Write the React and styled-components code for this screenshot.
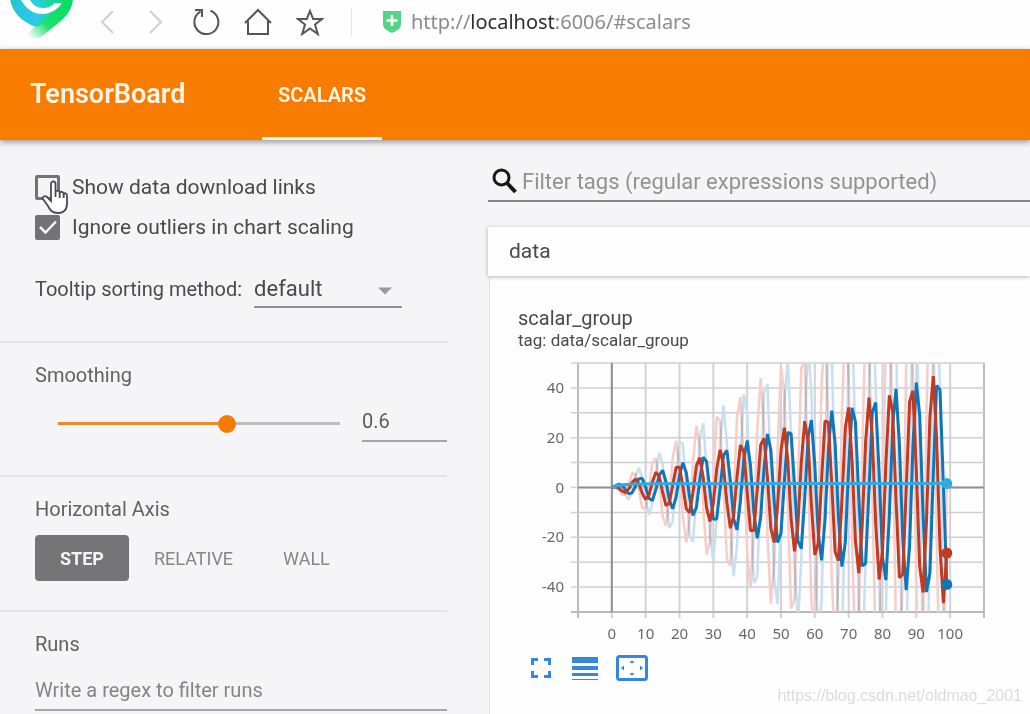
import React, { useState } from "react";
import styled, { createGlobalStyle } from "styled-components";

const GlobalStyle = createGlobalStyle`
    * {
        box-sizing: border-box;
    }

    body {
        margin: 0;
        background-color: #f5f5f7;
        font-family: Roboto, "Liberation Sans", sans-serif;
        color: #4a4a4a;
    }

    button, input, select {
        font-family: inherit;
        margin: 0;
    }
`;

const Page = styled.div`
    position: relative;
    display: flex;
    flex-direction: column;
    height: 100vh;
    overflow: hidden;
`;

const BrowserBar = styled.div`
    display: flex;
    align-items: center;
    flex: none;
    height: 49px;
    padding-bottom: 5px;
    background-color: #fefefe;
`;

const Logo = styled.svg`
    flex: none;
    align-self: flex-start;
    width: 84px;
    height: 44px;
`;

const NavButton = styled.button`
    display: flex;
    align-items: center;
    justify-content: center;
    flex: none;
    width: ${(props) => (props.$narrow ? "48px" : "52px")};
    height: 44px;
    padding: 0;
    border: none;
    background: none;
    color: ${(props) => (props.$faded ? "#cfcfd4" : "#55555a")};
`;

const BarDivider = styled.div`
    width: 1px;
    height: 28px;
    margin: 0 30px 0 15px;
    background-color: #e4e4e8;
`;

const Address = styled.div`
    margin-left: 9px;
    font-family: "Noto Sans", sans-serif;
    font-size: 20px;
    line-height: 28px;
    color: #8b8b92;

    b {
        font-weight: 400;
        color: #2c2c34;
    }
`;

const Toolbar = styled.header`
    display: flex;
    flex: none;
    position: relative;
    height: 91px;
    background-color: #f77c00;
    box-shadow: 0 2px 6px rgba(60, 60, 80, 0.55);
    color: #fff4e4;
`;

const Brand = styled.h1`
    width: 262px;
    margin: 0;
    padding-left: 30px;
    font-size: 27px;
    font-weight: 600;
    line-height: 91px;
`;

const Tab = styled.button`
    width: 120px;
    padding: 3px 0 0;
    border: none;
    border-bottom: 3px solid #fff4e4;
    background: none;
    color: inherit;
    font-size: 20px;
    font-weight: 600;
`;

const Content = styled.div`
    display: flex;
    flex: 1;
    min-height: 0;
`;

const Sidebar = styled.aside`
    flex: none;
    width: 447px;
    padding-top: 7px;
`;

const Section = styled.section`
    padding: 20px 0 29px 35px;
    border-bottom: ${(props) => (props.$last ? "none" : "2px solid #e4e4e6")};
`;

const CheckRow = styled.label`
    display: flex;
    align-items: center;
    position: relative;
    gap: 12px;
    height: 40px;
    font-size: 21px;
`;

const CheckBox = styled.input`
    appearance: none;
    width: 25px;
    height: 25px;
    border: 3px solid #737375;
    border-radius: 2px;

    &:checked {
        background-color: #737375;
    }
`;

const CheckMark = styled.svg`
    position: absolute;
    left: 3px;
    top: 10px;
    width: 20px;
    height: 20px;
`;

const Pointer = styled.svg`
    position: absolute;
    z-index: 1;
    left: 6px;
    top: 13px;
    width: 28px;
    height: 36px;
`;

const SortRow = styled.div`
    display: flex;
    align-items: center;
    gap: 12px;
    margin: 23px 0 4px;
    font-size: 20px;
`;

const SelectBox = styled.div`
    position: relative;
    width: 148px;

    svg {
        position: absolute;
        right: 10px;
        top: 17px;
    }
`;

const Select = styled.select`
    appearance: none;
    width: 100%;
    height: 38px;
    padding: 0;
    border: none;
    border-bottom: 2px solid #8f8f92;
    border-radius: 0;
    background: none;
    color: #4a4a4a;
    font-size: 22px;
`;

const SectionTitle = styled.h2`
    margin: 0;
    font-size: 20px;
    font-weight: 400;
    line-height: 24px;
    color: #626266;
`;

const SliderRow = styled.div`
    display: flex;
    align-items: center;
    gap: 13px;
    margin: 17px 0 4px;
`;

const Slider = styled.input`
    appearance: none;
    flex: 1;
    min-width: 0;
    height: 38px;
    margin-left: 14px;
    background: none;

    &::-webkit-slider-runnable-track {
        height: 3px;
        background: linear-gradient(
            to right,
            transparent 9px,
            #f0882a 9px,
            #f0882a 60%,
            #bdbdbf 60%,
            #bdbdbf calc(100% - 9px),
            transparent calc(100% - 9px)
        );
    }

    &::-webkit-slider-thumb {
        appearance: none;
        width: 18px;
        height: 18px;
        margin-top: -7px;
        border-radius: 50%;
        background-color: #f57c00;
    }
`;

const TextInput = styled.input`
    display: block;
    width: ${(props) => props.$width || "100%"};
    height: 38px;
    margin-top: ${(props) => (props.$spaced ? "17px" : "0")};
    padding: 0 0 2px;
    border: none;
    border-bottom: 2px solid #a6a6a8;
    outline: none;
    background: none;
    color: #5c5c60;
    font-size: 20px;

    &::placeholder {
        color: #858588;
        opacity: 1;
    }
`;

const AxisRow = styled.div`
    display: flex;
    margin-top: 14px;
`;

const AxisButton = styled.button`
    height: 46px;
    padding: 0 25px;
    border: none;
    border-radius: 4px;
    background-color: ${(props) => (props.$active ? "#757577" : "transparent")};
    color: ${(props) => (props.$active ? "#f5f5f7" : "#868689")};
    font-size: 18px;
    font-weight: ${(props) => (props.$active ? 700 : 400)};
`;

const Main = styled.main`
    display: flex;
    flex: 1;
    flex-direction: column;
    min-width: 0;
    padding: 22px 0 0 41px;
`;

const SearchRow = styled.label`
    display: flex;
    align-items: center;
    flex: none;
    gap: 5px;
    height: 40px;
    padding-left: 4px;
    border-bottom: 2px solid #858588;
`;

const SearchInput = styled.input`
    flex: 1;
    min-width: 0;
    padding: 0;
    border: none;
    outline: none;
    background: none;
    font-size: 22px;

    &::placeholder {
        color: #929295;
        opacity: 1;
    }
`;

const GroupHeader = styled.h2`
    flex: none;
    position: relative;
    margin: 25px 0 0;
    padding-left: 21px;
    background-color: #fefefe;
    box-shadow: 0 1px 4px rgba(0, 0, 0, 0.3);
    font-size: 21px;
    font-weight: 400;
    line-height: 49px;
`;

const Card = styled.div`
    flex: 1;
    margin-left: 1px;
    padding: 31px 0 0 28px;
    border-left: 1px solid #e2e2e4;
    background-color: #fefefe;
`;

const CardTitle = styled.div`
    font-size: 20px;
    line-height: 22px;
`;

const CardTag = styled.div`
    font-size: 17px;
    line-height: 22px;
`;

const Chart = styled.svg`
    display: block;
    width: 482px;
    height: 293px;

    text {
        font-family: "Noto Sans", sans-serif;
        font-size: 15px;
        fill: #66666e;
    }
`;

const ChartButtons = styled.div`
    display: flex;
    align-items: center;
    gap: 17px;
    margin: 10px 0 0 10px;
`;

const ChartButton = styled.button`
    display: flex;
    padding: 0;
    border: none;
    background: none;
    color: #3388dd;
`;

const Watermark = styled.div`
    position: absolute;
    right: 8px;
    bottom: 8px;
    font-family: "Liberation Sans", sans-serif;
    font-size: 16px;
    line-height: 20px;
    color: #dcdcde;
`;

// plot area inside the svg
const LEFT = 60;
const RIGHT = 466;
const TOP = 12;
const BOTTOM = 261;

const xPos = (step) => LEFT + ((step + 10) / 120) * (RIGHT - LEFT);
const yPos = (value) => TOP + ((50 - value) / 100) * (BOTTOM - TOP);

function toPath(values) {
    return values
        .map((v, i) => `${i ? "L" : "M"}${xPos(i).toFixed(1)} ${yPos(v).toFixed(1)}`)
        .join("");
}

function smooth(values, weight) {
    let last = 0;
    return values.map((v, i) => {
        last = last * weight + (1 - weight) * v;
        return last / (1 - Math.pow(weight, i + 1));
    });
}

const steps = Array.from({ length: 100 }, (_, i) => i);

const series = [
    { name: "xsinx", color: "#0f77b8", light: "#c7dfee", values: steps.map((x) => x * Math.sin(x)) },
    { name: "xcosx", color: "#c23a22", light: "#f6cdc8", values: steps.map((x) => x * Math.cos(x)) },
    { name: "arctanx", color: "#33a9dd", light: "#b5e0f3", values: steps.map((x) => Math.atan(x)) },
];

const xTicks = [0, 10, 20, 30, 40, 50, 60, 70, 80, 90, 100];
const yTicks = [40, 20, 0, -20, -40];
const yLines = [50, 40, 30, 20, 10, 0, -10, -20, -30, -40, -50];

function ScalarChart({ smoothing }) {
    return (
        <Chart viewBox="0 0 482 293" role="img" aria-label="scalar_group">
            <clipPath id="plot">
                <rect x={LEFT} y={TOP} width={RIGHT - LEFT + 2} height={BOTTOM - TOP} />
            </clipPath>
            {[-10, ...xTicks, 110].map((t) => (
                <line
                    key={t}
                    x1={xPos(t)}
                    x2={xPos(t)}
                    y1={TOP}
                    y2={BOTTOM + 6}
                    stroke={t === -10 || t === 110 ? "#bcbcc2" : "#d2d2d8"}
                    strokeWidth="2"
                />
            ))}
            {yLines.map((t) => (
                <line
                    key={t}
                    x1={LEFT - 7}
                    x2={RIGHT}
                    y1={yPos(t)}
                    y2={yPos(t)}
                    stroke={t === -50 ? "#b8b8be" : "#ceced4"}
                    strokeWidth={t === -50 ? 2 : 1.5}
                />
            ))}
            <line x1={xPos(0)} x2={xPos(0)} y1={TOP} y2={BOTTOM} stroke="#909092" strokeWidth="2" />
            <line x1={LEFT} x2={RIGHT} y1={yPos(0)} y2={yPos(0)} stroke="#909092" strokeWidth="2" />
            <g clipPath="url(#plot)" fill="none" strokeLinejoin="bevel">
                {series.map((s) => (
                    <path
                        key={s.name}
                        d={toPath(s.values)}
                        stroke={s.light}
                        strokeWidth="2.5"
                        style={{ mixBlendMode: "multiply" }}
                    />
                ))}
                {series.map((s) => (
                    <path key={s.name} d={toPath(smooth(s.values, smoothing))} stroke={s.color} strokeWidth="3" />
                ))}
            </g>
            {series.map((s) => (
                <circle
                    key={s.name}
                    cx={xPos(99)}
                    cy={yPos(smooth(s.values, smoothing)[99])}
                    r="5.5"
                    fill={s.color}
                />
            ))}
            {yTicks.map((t) => (
                <text key={t} x={LEFT - 14} y={yPos(t) + 5} textAnchor="end">
                    {t}
                </text>
            ))}
            {xTicks.map((t) => (
                <text key={t} x={xPos(t)} y={BOTTOM + 27} textAnchor="middle">
                    {t}
                </text>
            ))}
        </Chart>
    );
}

function App() {
    const [showLinks, setShowLinks] = useState(false);
    const [ignoreOutliers, setIgnoreOutliers] = useState(true);
    const [smoothing, setSmoothing] = useState(0.6);
    const [axis, setAxis] = useState("STEP");

    function changeSmoothing(e) {
        setSmoothing(Math.min(0.999, Math.max(0, Number(e.target.value))));
    }

    return (
        <Page>
            <GlobalStyle />
            <BrowserBar>
                <Logo viewBox="0 0 84 44" aria-hidden="true">
                    <defs>
                        <linearGradient id="ring" x1="10" y1="10" x2="74" y2="0" gradientUnits="userSpaceOnUse">
                            <stop offset="0" stopColor="#25c3cf" />
                            <stop offset="0.4" stopColor="#2ccbe8" />
                            <stop offset="0.7" stopColor="#19d98a" />
                            <stop offset="1" stopColor="#0fd86a" />
                        </linearGradient>
                        <linearGradient id="tail" x1="60" y1="8" x2="30" y2="38" gradientUnits="userSpaceOnUse">
                            <stop offset="0" stopColor="#08e060" />
                            <stop offset="0.5" stopColor="#1fe070" />
                            <stop offset="1" stopColor="#1fe070" stopOpacity="0" />
                        </linearGradient>
                    </defs>
                    <path d="M10 -4C10 10 21 22 36 27L62 15L73 -4Z" fill="url(#ring)" />
                    <path d="M73 -2C73 12 62 20 52 28C46 33 43 36 38 38H24C31 30 38 23 46 18L62 6V-2Z" fill="url(#tail)" />
                    <path d="M21 0C27 10 34 14 42 14C51 14 58 9 62 3H55C52 6 48 8 43 8C37 8 33 5 30 0Z" fill="#fefefe" />
                </Logo>
                <NavButton $faded $narrow aria-label="Back">
                    <svg width="14" height="26" viewBox="0 0 14 26" fill="none" stroke="currentColor" strokeWidth="2">
                        <path d="M12 2L1 13L12 24" />
                    </svg>
                </NavButton>
                <NavButton $faded $narrow aria-label="Forward">
                    <svg width="14" height="26" viewBox="0 0 14 26" fill="none" stroke="currentColor" strokeWidth="2">
                        <path d="M1 2L12 13L1 24" />
                    </svg>
                </NavButton>
                <NavButton aria-label="Reload">
                    <svg width="28" height="28" viewBox="0 0 28 28" fill="none" stroke="currentColor" strokeWidth="2">
                        <path d="M18.500 2.800A12 12 0 1 1 8.500 3.600M3 2H10V9" />
                    </svg>
                </NavButton>
                <NavButton aria-label="Home">
                    <svg width="28" height="28" viewBox="0 0 28 28" fill="none" stroke="currentColor" strokeWidth="2">
                        <path d="M1 15L14 2L27 15M4 13V26H24V13" />
                    </svg>
                </NavButton>
                <NavButton aria-label="Favourite">
                    <svg width="28" height="28" viewBox="0 0 28 28" fill="none" stroke="currentColor" strokeWidth="2">
                        <path d="M14 3L17.200 11H26L19 16.500L21.800 26L14 20.500L6.200 26L9 16.500L2 11H10.800Z" />
                    </svg>
                </NavButton>
                <BarDivider />
                <svg width="20" height="24" viewBox="0 0 20 24" aria-hidden="true">
                    <path d="M1 1H19V14C19 19 14 21 10 23C6 21 1 19 1 14Z" fill="#55d488" />
                    <path d="M10 5V16M4.500 10.500H15.500" stroke="#ffffff" strokeWidth="2.500" />
                </svg>
                <Address>
                    http://<b>localhost</b>:6006/#scalars
                </Address>
            </BrowserBar>

            <Toolbar>
                <Brand>TensorBoard</Brand>
                <Tab>SCALARS</Tab>
            </Toolbar>

            <Content>
                <Sidebar>
                    <Section>
                        <CheckRow>
                            <CheckBox
                                type="checkbox"
                                checked={showLinks}
                                onChange={() => setShowLinks((prev) => !prev)}
                            />
                            Show data download links
                            <Pointer viewBox="0 0 28 36" aria-hidden="true">
                                <path
                                    d="M10 4C10 0.500 14.500 0.500 14.500 4V12C15 10 18.500 10 18.700 13C19.500 11 22.500 11.500 22.700 14C23.500 12.500 26 13 26 16V23C26 29 23 33 17 33C11 33 9 30 7 26L2 19C1 17 4 15 6 17L10 21Z"
                                    fill="#ffffff"
                                    stroke="#4c4c58"
                                    strokeWidth="1.800"
                                />
                                <path d="M14.500 12V17M18.700 13V18M22.700 14V18" stroke="#4c4c58" strokeWidth="1.800" />
                            </Pointer>
                        </CheckRow>
                        <CheckRow>
                            <CheckBox
                                type="checkbox"
                                checked={ignoreOutliers}
                                onChange={() => setIgnoreOutliers((prev) => !prev)}
                            />
                            {ignoreOutliers && (
                                <CheckMark viewBox="0 0 20 20" fill="none" stroke="#f5f5f7" strokeWidth="2.500">
                                    <path d="M2 10L7.500 15.500L18 4.500" />
                                </CheckMark>
                            )}
                            Ignore outliers in chart scaling
                        </CheckRow>
                        <SortRow>
                            <label htmlFor="sorting">Tooltip sorting method:</label>
                            <SelectBox>
                                <Select id="sorting" defaultValue="default">
                                    <option>default</option>
                                    <option>descending</option>
                                    <option>ascending</option>
                                    <option>nearest</option>
                                </Select>
                                <svg width="14" height="8" viewBox="0 0 14 8" pointerEvents="none">
                                    <path d="M0 0.500H14L7 7.500Z" fill="#9a9a9d" />
                                </svg>
                            </SelectBox>
                        </SortRow>
                    </Section>

                    <Section>
                        <SectionTitle>Smoothing</SectionTitle>
                        <SliderRow>
                            <Slider
                                type="range"
                                min="0"
                                max="1"
                                step="0.001"
                                aria-label="Smoothing"
                                value={smoothing}
                                onChange={changeSmoothing}
                            />
                            <TextInput
                                $width="85px"
                                aria-label="Smoothing value"
                                value={smoothing}
                                onChange={changeSmoothing}
                            />
                        </SliderRow>
                    </Section>

                    <Section>
                        <SectionTitle>Horizontal Axis</SectionTitle>
                        <AxisRow>
                            {["STEP", "RELATIVE", "WALL"].map((name) => (
                                <AxisButton key={name} $active={axis === name} onClick={() => setAxis(name)}>
                                    {name}
                                </AxisButton>
                            ))}
                        </AxisRow>
                    </Section>

                    <Section $last>
                        <SectionTitle>Runs</SectionTitle>
                        <TextInput $spaced aria-label="Runs" placeholder="Write a regex to filter runs" />
                    </Section>
                </Sidebar>

                <Main>
                    <SearchRow>
                        <svg width="25" height="26" viewBox="0 0 25 26" fill="none" stroke="#18181a" aria-hidden="true">
                            <circle cx="9.500" cy="9.500" r="7.500" strokeWidth="3" />
                            <path d="M15 15L23.500 24" strokeWidth="4" />
                        </svg>
                        <SearchInput
                            aria-label="Filter tags"
                            placeholder="Filter tags (regular expressions supported)"
                        />
                    </SearchRow>
                    <GroupHeader>data</GroupHeader>
                    <Card>
                        <CardTitle>scalar_group</CardTitle>
                        <CardTag>tag: data/scalar_group</CardTag>
                        <ScalarChart smoothing={smoothing} />
                        <ChartButtons>
                            <ChartButton aria-label="Fullscreen">
                                <svg width="26" height="26" viewBox="0 0 26 26" fill="none" stroke="currentColor" strokeWidth="3">
                                    <path d="M4.500 10V4.500H10M16 4.500H21.500V10M21.500 16V21.500H16M10 21.500H4.500V16" />
                                </svg>
                            </ChartButton>
                            <ChartButton aria-label="Toggle log scale">
                                <svg width="28" height="26" viewBox="0 0 28 26" fill="currentColor">
                                    <path d="M1 2H27V8H1ZM1 11H27V15H1ZM1 18H27V21H1ZM1 24H27V25H1Z" />
                                </svg>
                            </ChartButton>
                            <ChartButton aria-label="Fit domain to data">
                                <svg width="32" height="28" viewBox="0 0 32 28" fill="currentColor">
                                    <rect x="1.500" y="2.500" width="29" height="23" rx="2" fill="none" stroke="currentColor" strokeWidth="3" />
                                    <path d="M16 6L18.500 9H13.500ZM16 22L18.500 19H13.500ZM5 14L8 11.500V16.500ZM27 14L24 11.500V16.500Z" />
                                </svg>
                            </ChartButton>
                        </ChartButtons>
                    </Card>
                </Main>
            </Content>
            <Watermark>https://blog.csdn.net/oldmao_2001</Watermark>
        </Page>
    );
}

export default App;
